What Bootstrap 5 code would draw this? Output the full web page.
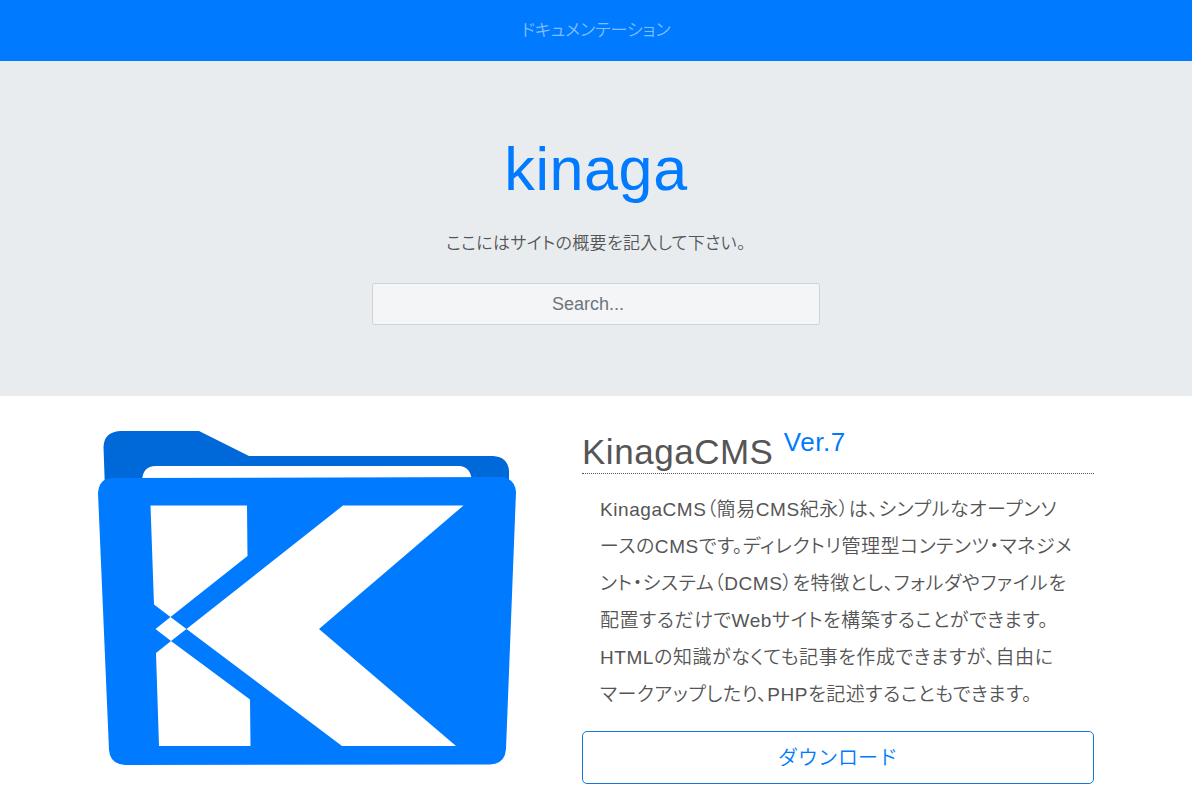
<!DOCTYPE html>
<html lang="ja">
<head>
<meta charset="utf-8">
<meta name="viewport" content="width=device-width, initial-scale=1">
<title>kinaga</title>
<link rel="stylesheet" href="https://cdn.jsdelivr.net/npm/bootstrap@5.3.0/dist/css/bootstrap.min.css">
<style>
:root{--brand:#007bff;--brand-dark:#0069d9}
body{font-family:"Liberation Sans","Noto Sans CJK JP",sans-serif;font-size:17px;font-weight:350;line-height:27px;color:#555;font-feature-settings:"palt"}
.top-nav{background:var(--brand);min-height:61px}
.top-nav a{color:#80bdff}
.hero{background:#e8ecef;padding:70px 16px 71px}
.hero h1{font-size:61px;line-height:76px;font-weight:400;letter-spacing:.01em;margin-bottom:23px}
.hero h1 a{color:var(--brand)}
.hero p{letter-spacing:.02em;margin-bottom:26px}
.search-box{max-width:448px}
.search-box input{height:42px;border-color:#ced4da;border-radius:3px;background:#f4f5f7;font-size:18px}
.search-box input::placeholder{color:#6c757d}
.intro{max-width:1028px;padding:35px 16px 12px}
.intro-cols{display:grid;grid-template-columns:1fr;gap:32px}
@media(min-width:768px){.intro-cols{grid-template-columns:418fr 512fr;gap:66px}}
.title{font-size:35px;line-height:42px;font-weight:400;letter-spacing:.015em;border-bottom:1px dotted #555;margin-bottom:17px}
.title sup{font-size:26px;color:var(--brand)}
.about{font-size:19px;line-height:37px;letter-spacing:.03em;padding:0 17px 0 18px;margin-bottom:18px}
.download,.download:hover{color:#007bff;border:1px solid #1478d4;border-radius:5px;font-size:20px;font-weight:350;height:53px}
</style>
</head>
<body>
<nav class="top-nav d-flex align-items-center justify-content-center"><a class="text-decoration-none" href="#docs">ドキュメンテーション</a></nav>
<header class="hero text-center">
<h1><a class="text-decoration-none" href="#">kinaga</a></h1>
<p>ここにはサイトの概要を記入して下さい。</p>
<form class="search-box mx-auto" role="search"><input class="form-control text-center" type="search" placeholder="Search..." aria-label="Search"></form>
</header>
<main class="intro mx-auto">
<div class="intro-cols">
<div>
<svg class="w-100 d-block" viewBox="98 431 418 334" role="img" aria-label="KinagaCMS">
<path fill="#0069d9" d="M105 490 103.500 447Q104 432 120 431H199L249 456H493Q508 457 509 471V490Z"/>
<path fill="#fff" d="M142 482Q142 466 156 466H460Q471 467 472 482Z"/>
<path fill="#007bff" d="M98 493Q99 478 113 478L502 477Q515 479 516 492L506 749Q505 764 490 764.500L125 765Q110 764 109 750Z"/>
<path fill="#fff" d="M150.500 505.500H247L247.500 556 170.500 617 186.500 629 343 505.500H463.500L319 629 456 746H342L186.500 629 171 641 250 699.500 250.500 746H159L156 653 171 641 155.500 629 170.500 617 154 604.500Z"/>
</svg>
</div>
<div>
<h2 class="title">KinagaCMS <sup>Ver.7</sup></h2>
<p class="about">KinagaCMS（簡易CMS紀永）は、シンプルなオープンソ<br class="d-none d-lg-inline">ースのCMSです。ディレクトリ管理型コンテンツ・マネジメント・システム（DCMS）を特徴とし、フォルダやファイルを配置するだけでWebサイトを構築することができます。<br>HTMLの知識がなくても記事を作成できますが、自由に<br class="d-none d-lg-inline">マークアップしたり、PHPを記述することもできます。</p>
<button type="button" class="btn download w-100">ダウンロード</button>
</div>
</div>
</main>
<script src="https://cdn.jsdelivr.net/npm/bootstrap@5.3.0/dist/js/bootstrap.bundle.min.js"></script>
</body>
</html>
